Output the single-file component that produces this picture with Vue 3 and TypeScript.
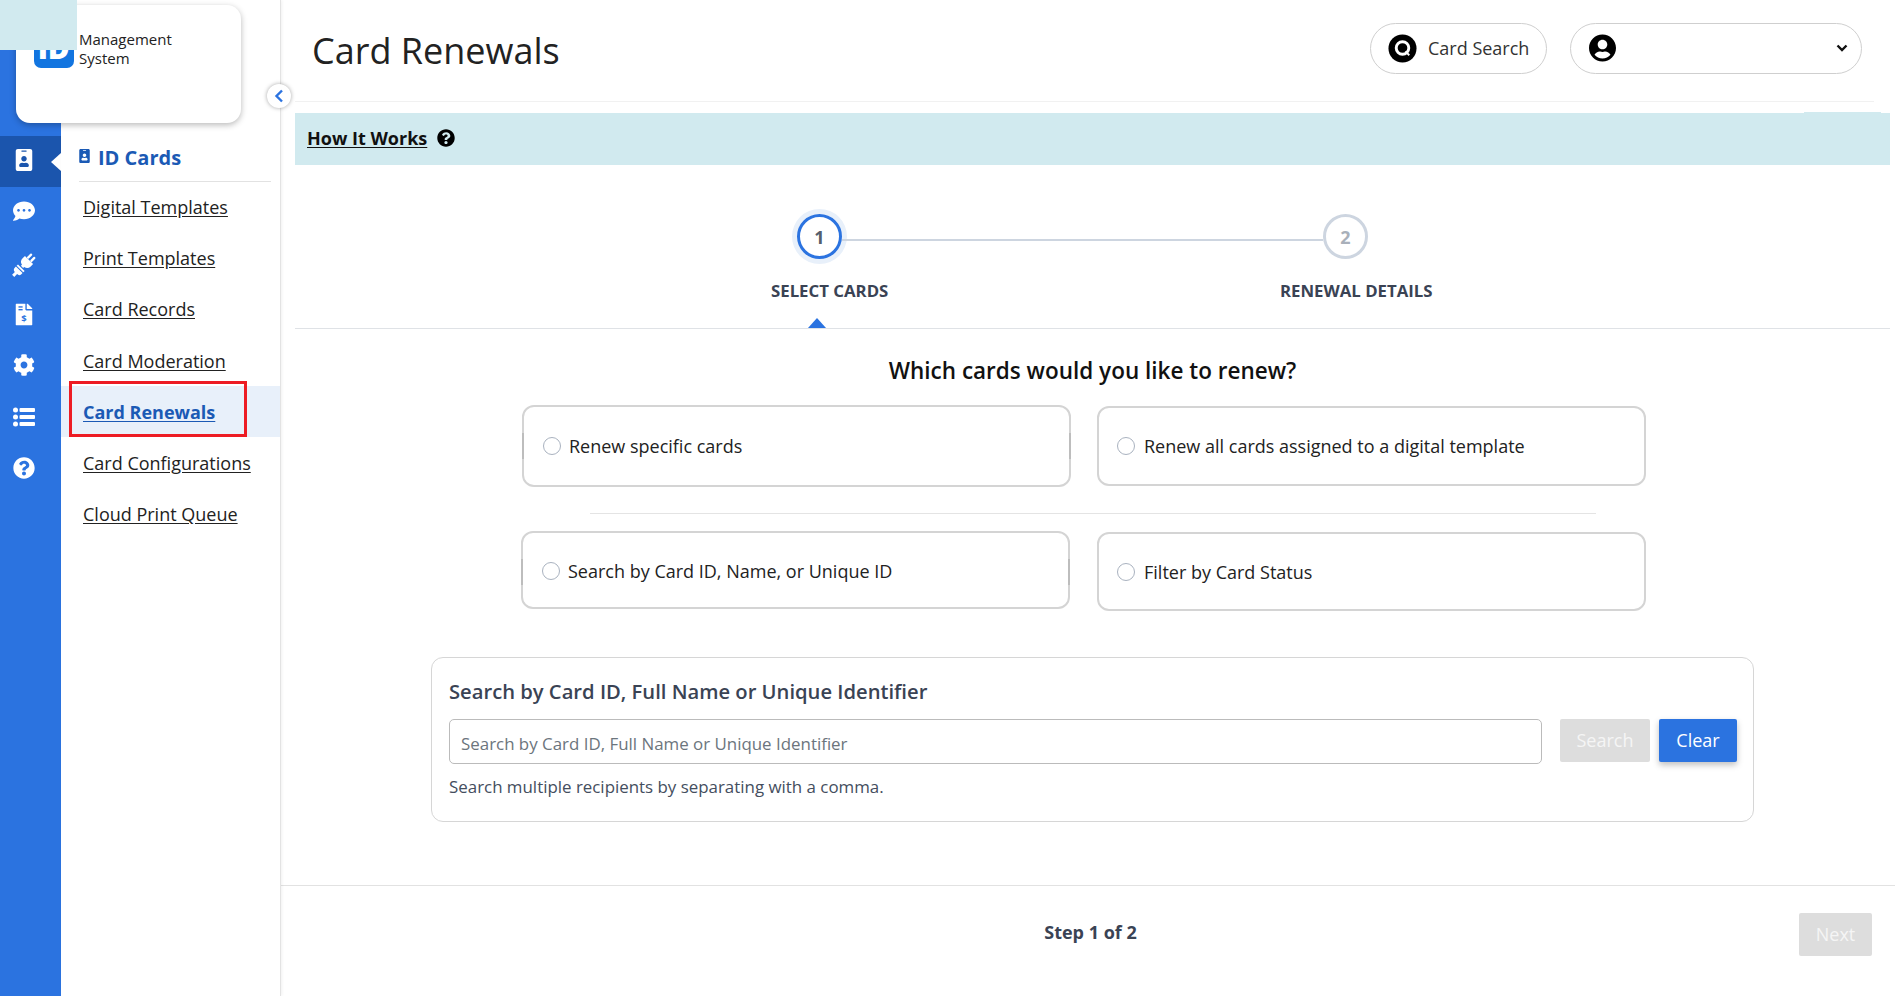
<script setup lang="ts">
const railIcons = ['badge', 'chat', 'plug', 'file', 'cog', 'list', 'help']

const navLinks = [
  'Digital Templates',
  'Print Templates',
  'Card Records',
  'Card Moderation',
  'Card Renewals',
  'Card Configurations',
  'Cloud Print Queue',
]
const activeLink = 'Card Renewals'

const questionPath =
  'M504 256c0 136.997-111.043 248-248 248S8 392.997 8 256C8 119.083 119.043 8 256 8s248 111.083 248 248zM262.655 90c-54.497 0-89.255 22.957-116.549 63.758-3.536 5.286-2.353 12.415 2.715 16.258l34.699 26.31c5.205 3.947 12.621 3.008 16.665-2.122 17.864-22.658 30.113-35.797 57.303-35.797 20.429 0 45.698 13.148 45.698 32.958 0 14.976-12.363 22.667-32.534 33.976C247.128 238.528 216 254.941 216 296v4c0 6.627 5.373 12 12 12h56c6.627 0 12-5.373 12-12v-1.333c0-28.462 83.186-29.647 83.186-106.667 0-58.002-60.165-102-116.531-102zM256 338c-25.365 0-46 20.635-46 46 0 25.364 20.635 46 46 46s46-20.636 46-46c0-25.365-20.635-46-46-46z'
</script>

<template>
  <div class="page">
    <!-- icon rail -->
    <aside class="rail">
      <div v-for="icon in railIcons" :key="icon" class="rail-item" :class="{ active: icon === 'badge' }">
        <svg v-if="icon === 'badge'" class="rail-icon" viewBox="0 0 384 512">
          <path fill="#fff" d="M336 0H48C21.5 0 0 21.5 0 48v416c0 26.5 21.500 48 48 48h288c26.500 0 48-21.500 48-48V48c0-26.500-21.500-48-48-48zM144 32h96c8.800 0 16 7.200 16 16s-7.200 16-16 16h-96c-8.800 0-16-7.200-16-16s7.200-16 16-16zm48 128c35.300 0 64 28.700 64 64s-28.700 64-64 64-64-28.700-64-64 28.700-64 64-64zm112 236.800c0 10.600-10 19.200-22.400 19.200H102.400C90 416 80 407.400 80 396.800v-19.200c0-31.800 30.100-57.600 67.200-57.600h5c12.300 5.100 25.700 8 39.800 8s27.600-2.900 39.800-8h5c37.100 0 67.200 25.800 67.200 57.600v19.200z" />
        </svg>
        <svg v-else-if="icon === 'chat'" class="rail-icon" viewBox="0 0 512 512">
          <path fill="#fff" d="M256 32C114.600 32 0 125.100 0 240c0 49.600 21.400 95 57 130.700C44.500 421.100 2.700 466 2.200 466.500c-2.200 2.300-2.800 5.700-1.500 8.700S4.800 480 8 480c66.300 0 116-31.800 140.600-51.400 32.700 12.300 69 19.400 107.400 19.400 141.400 0 256-93.100 256-208S397.400 32 256 32zM128 272c-17.700 0-32-14.300-32-32s14.300-32 32-32 32 14.300 32 32-14.300 32-32 32zm128 0c-17.700 0-32-14.300-32-32s14.300-32 32-32 32 14.300 32 32-14.300 32-32 32zm128 0c-17.700 0-32-14.300-32-32s14.300-32 32-32 32 14.300 32 32-14.300 32-32 32z" />
        </svg>
        <svg v-else-if="icon === 'plug'" class="rail-icon plug" viewBox="0 0 24 24">
          <g fill="#fff" transform="rotate(45 12 12)">
            <rect x="8.700" y="-1.500" width="2.200" height="6" rx="1" />
            <rect x="13.100" y="-1.500" width="2.200" height="6" rx="1" />
            <path d="M6.500 4.500h11v3.200a5 5 0 0 1-4 4.900V14h-3v-1.400a5 5 0 0 1-4-4.900z" />
            <rect x="7.500" y="15" width="9" height="1.800" />
            <path d="M7.500 17.800h9v1.600a3 3 0 0 1-3 2.800v3.800h-3v-3.800a3 3 0 0 1-3-2.800z" />
          </g>
        </svg>
        <svg v-else-if="icon === 'file'" class="rail-icon file" viewBox="0 0 384 512">
          <path fill="#fff" d="M377 105L279 7c-4.500-4.500-10.600-7-17-7H256v128h128v-6.100c0-6.300-2.500-12.400-7-16.900zM224 136V0H24C10.700 0 0 10.700 0 24v464c0 13.300 10.700 24 24 24h336c13.300 0 24-10.700 24-24V160H248c-13.200 0-24-10.800-24-24z" />
          <rect x="64" y="64" width="96" height="32" fill="#2b73e0" />
          <rect x="64" y="128" width="96" height="32" fill="#2b73e0" />
          <text x="192" y="420" text-anchor="middle" class="dollar">$</text>
        </svg>
        <svg v-else-if="icon === 'cog'" class="rail-icon" viewBox="0 0 512 512">
          <path fill="#fff" d="M487.400 315.700l-42.600-24.600c4.300-23.200 4.300-47 0-70.200l42.600-24.600c4.900-2.800 7.100-8.600 5.500-14-11.100-35.600-30-67.800-54.700-94.600-3.800-4.100-10-5.100-14.800-2.300L380.800 110c-17.900-15.400-38.500-27.300-60.800-35.100V25.800c0-5.600-3.900-10.500-9.400-11.700-36.700-8.200-74.300-7.800-109.200 0-5.500 1.200-9.400 6.100-9.400 11.700V75c-22.200 7.900-42.800 19.800-60.800 35.100L88.700 85.500c-4.900-2.800-11-1.900-14.800 2.300-24.700 26.700-43.600 58.900-54.700 94.600-1.700 5.400.6 11.200 5.500 14L67.300 221c-4.300 23.200-4.300 47 0 70.200l-42.600 24.600c-4.900 2.800-7.100 8.600-5.500 14 11.100 35.600 30 67.800 54.700 94.600 3.800 4.100 10 5.100 14.800 2.300l42.600-24.600c17.900 15.400 38.500 27.300 60.800 35.100v49.200c0 5.600 3.900 10.500 9.400 11.700 36.700 8.200 74.300 7.800 109.200 0 5.500-1.200 9.400-6.100 9.400-11.700v-49.200c22.200-7.900 42.800-19.800 60.800-35.100l42.600 24.600c4.900 2.800 11 1.900 14.800-2.300 24.700-26.700 43.600-58.900 54.700-94.600 1.500-5.500-.7-11.300-5.600-14.100zM256 336c-44.100 0-80-35.900-80-80s35.900-80 80-80 80 35.900 80 80-35.900 80-80 80z" />
        </svg>
        <svg v-else-if="icon === 'list'" class="rail-icon" viewBox="0 0 22 20">
          <g fill="#fff">
            <circle cx="2.500" cy="3" r="2.500" />
            <circle cx="2.500" cy="10" r="2.500" />
            <circle cx="2.500" cy="17" r="2.500" />
            <rect x="6.500" y="1" width="15.500" height="4" rx="1" />
            <rect x="6.500" y="8" width="15.500" height="4" rx="1" />
            <rect x="6.500" y="15" width="15.500" height="4" rx="1" />
          </g>
        </svg>
        <svg v-else class="rail-icon" viewBox="0 0 512 512">
          <path fill="#fff" :d="questionPath" />
        </svg>
      </div>
    </aside>

    <!-- logo card sits over rail and sidebar -->
    <div class="logo-card">
      <div class="logo-mark">iD</div>
      <div class="logo-text">Management<br />System</div>
    </div>
    <div class="logo-patch"></div>

    <!-- secondary nav -->
    <nav class="sidebar">
      <div class="sidebar-title">
        <svg class="title-icon" viewBox="0 0 384 512">
          <path fill="#1b5ab5" d="M336 0H48C21.500 0 0 21.500 0 48v416c0 26.500 21.500 48 48 48h288c26.500 0 48-21.500 48-48V48c0-26.500-21.500-48-48-48zM144 32h96c8.800 0 16 7.200 16 16s-7.200 16-16 16h-96c-8.800 0-16-7.200-16-16s7.200-16 16-16zm48 128c35.300 0 64 28.700 64 64s-28.700 64-64 64-64-28.700-64-64 28.700-64 64-64zm112 236.800c0 10.600-10 19.200-22.400 19.200H102.400C90 416 80 407.400 80 396.800v-19.200c0-31.800 30.100-57.600 67.200-57.600h5c12.300 5.100 25.700 8 39.800 8s27.600-2.900 39.800-8h5c37.100 0 67.200 25.800 67.200 57.600v19.200z" />
        </svg>
        <span>ID Cards</span>
      </div>
      <div v-for="link in navLinks" :key="link" class="nav-row" :class="{ active: link === activeLink }">
        <a href="#" class="nav-link">{{ link }}</a>
        <div v-if="link === activeLink" class="red-box"></div>
      </div>
      <button class="collapse-btn" aria-label="Collapse">
        <svg width="12" height="14" viewBox="0 0 12 14">
          <path d="M9 1.500 3.500 7 9 12.500" fill="none" stroke="#2b73e0" stroke-width="2.400" />
        </svg>
      </button>
    </nav>

    <main class="main">
      <header class="topbar">
        <h1 class="page-title">Card Renewals</h1>
        <div class="pill search-pill">
          <svg class="pill-icon" viewBox="0 0 30 30">
            <circle cx="15" cy="15" r="14.500" fill="#000" />
            <circle cx="15" cy="14.500" r="6.500" fill="none" stroke="#fff" stroke-width="3" />
            <path d="M18 18l4 4" stroke="#fff" stroke-width="2" />
          </svg>
          <span>Card Search</span>
        </div>
        <div class="pill user-pill">
          <svg class="user-icon" viewBox="0 0 496 512">
            <path fill="#000" d="M248 8C111 8 0 119 0 256s111 248 248 248 248-111 248-248S385 8 248 8zm0 96c48.600 0 88 39.400 88 88s-39.400 88-88 88-88-39.400-88-88 39.400-88 88-88zm0 344c-58.700 0-111.300-26.600-146.500-68.200 18.800-35.400 55.600-59.800 98.500-59.800 2.400 0 4.800.4 7.100 1.100 13 4.200 26.600 6.900 40.900 6.900 14.300 0 28-2.700 40.900-6.900 2.300-.7 4.700-1.100 7.100-1.100 42.900 0 79.700 24.400 98.500 59.800C359.300 421.400 306.700 448 248 448z" />
          </svg>
          <svg class="caret-down" width="12" height="8" viewBox="0 0 12 8">
            <path d="M1.500 1.500 6 6l4.500-4.500" fill="none" stroke="#111" stroke-width="2.400" />
          </svg>
        </div>
      </header>

      <section class="banner">
        <a href="#" class="banner-link">How It Works</a>
        <svg class="banner-icon" viewBox="0 0 512 512">
          <path fill="#000" :d="questionPath" />
        </svg>
        <div class="banner-bump"></div>
      </section>

      <section class="steps">
        <div class="step-track">
          <div class="step-circle current">1</div>
          <div class="step-line"></div>
          <div class="step-circle">2</div>
        </div>
        <div class="step-labels">
          <span class="step-label first">SELECT CARDS</span>
          <span class="step-label">RENEWAL DETAILS</span>
        </div>
        <div class="step-caret"></div>
      </section>

      <h2 class="question">Which cards would you like to renew?</h2>

      <div class="option-row top">
        <label class="option left">
          <input type="radio" name="scope" />
          <span>Renew specific cards</span>
        </label>
        <label class="option right">
          <input type="radio" name="scope" />
          <span>Renew all cards assigned to a digital template</span>
        </label>
      </div>
      <div class="option-divider"></div>
      <div class="option-row bottom">
        <label class="option left">
          <input type="radio" name="mode" />
          <span>Search by Card ID, Name, or Unique ID</span>
        </label>
        <label class="option right">
          <input type="radio" name="mode" />
          <span>Filter by Card Status</span>
        </label>
      </div>

      <section class="search-panel">
        <h3 class="panel-title">Search by Card ID, Full Name or Unique Identifier</h3>
        <div class="search-row">
          <input class="search-input" type="text" placeholder="Search by Card ID, Full Name or Unique Identifier" />
          <button class="btn disabled search-btn">Search</button>
          <button class="btn primary">Clear</button>
        </div>
        <p class="panel-help">Search multiple recipients by separating with a comma.</p>
      </section>

      <footer class="footer">
        <span></span>
        <span class="step-count">Step 1 of 2</span>
        <button class="btn disabled next-btn">Next</button>
      </footer>
    </main>
  </div>
</template>

<style>
html,
body {
  margin: 0;
  background: #fff;
}
</style>

<style scoped>
.page {
  position: relative;
  display: flex;
  height: 996px;
  overflow: hidden;
  font-family: 'Open Sans', 'Noto Sans', sans-serif;
  color: #222;
  background: #fff;
}

.rail {
  width: 61px;
  flex-shrink: 0;
  padding-top: 136px;
  box-sizing: border-box;
  background: #2b73e0;
}

.rail-item {
  position: relative;
  display: flex;
  align-items: center;
  justify-content: center;
  height: 51.3px;
  padding: 0 13px 3px 0;
  box-sizing: border-box;
}

.rail-item.active {
  background: #1b55ad;
}

.rail-item.active::after {
  content: '';
  position: absolute;
  right: 0;
  top: 50%;
  margin-top: -9px;
  border-style: solid;
  border-width: 9px 10px 9px 0;
  border-color: transparent #fff transparent transparent;
}

.rail-icon {
  width: 22px;
  height: 22px;
}

.rail-icon.plug {
  width: 25px;
  height: 25px;
  transform: translate(-1px, 3px);
}

.rail-icon.file {
  transform: translateY(0.5px);
}

.dollar {
  font: 700 220px 'Open Sans', sans-serif;
  fill: #2b73e0;
}

.logo-card {
  position: absolute;
  left: 16px;
  top: 5px;
  width: 225px;
  height: 118px;
  background: #fff;
  border-radius: 14px;
  box-shadow: 0 2px 6px rgba(0, 0, 0, 0.28);
  z-index: 2;
}

.logo-mark {
  position: absolute;
  left: 18px;
  top: 23px;
  width: 40px;
  height: 40px;
  border-radius: 7px;
  background: #1275e0;
  color: #fff;
  font-size: 30px;
  font-weight: 800;
  line-height: 40px;
  text-align: center;
}

.logo-text {
  position: absolute;
  left: 63px;
  top: 25px;
  font-size: 15px;
  line-height: 19px;
  color: #222;
}

.logo-patch {
  position: absolute;
  left: 0;
  top: 0;
  width: 77px;
  height: 50px;
  background: #d1eaef;
  z-index: 3;
}

.sidebar {
  position: relative;
  width: 220px;
  flex-shrink: 0;
  box-sizing: border-box;
  padding-top: 145px;
  border-right: 1px solid #e3e3e3;
  box-shadow: 1px 0 3px rgba(0, 0, 0, 0.06);
  z-index: 1;
  background: #fff;
}

.sidebar-title {
  display: flex;
  align-items: center;
  gap: 8px;
  height: 25px;
  margin: 0 9px -1px 18px;
  padding-bottom: 11px;
  border-bottom: 1px solid #e2e2e2;
  color: #1b5ab5;
  font-size: 20px;
  font-weight: 700;
  line-height: 24px;
}

.title-icon {
  width: 11px;
  height: 14px;
  margin-top: -3px;
}

.nav-row {
  position: relative;
  display: flex;
  align-items: center;
  height: 51.3px;
  padding-left: 22px;
}

.nav-row.active {
  background: #e8f0fa;
}

.nav-link {
  font-size: 18px;
  color: #222;
  text-decoration: underline;
  text-underline-offset: 2px;
}

.nav-row.active .nav-link {
  color: #1b5ab5;
  font-weight: 700;
}

.red-box {
  position: absolute;
  left: 8px;
  top: -5px;
  width: 178px;
  height: 56px;
  box-sizing: border-box;
  border: 3px solid #ed1c24;
}

.collapse-btn {
  position: absolute;
  left: 206px;
  top: 84px;
  width: 24px;
  height: 24px;
  padding: 0;
  display: flex;
  align-items: center;
  justify-content: center;
  border: none;
  border-radius: 50%;
  background: #fff;
  box-shadow: 0 0 4px rgba(0, 0, 0, 0.35);
}

.main {
  flex: 1;
  min-width: 0;
  display: flex;
  flex-direction: column;
}

.topbar {
  display: flex;
  align-items: center;
  height: 96px;
  margin: 0 21px 0 14px;
  padding: 0 12px 5px 17px;
  border-bottom: 1px solid #f1f1f1;
}

.page-title {
  margin: 4px auto 0 0;
  font-size: 36px;
  font-weight: 400;
  color: #222;
}

.pill {
  display: flex;
  align-items: center;
  height: 51px;
  box-sizing: border-box;
  border: 1px solid #cfcfcf;
  border-radius: 26px;
  background: #fff;
}

.search-pill {
  width: 177px;
  padding-left: 17px;
  gap: 11px;
  font-size: 18px;
  color: #333;
}

.pill-icon {
  width: 29px;
  height: 29px;
}

.user-pill {
  width: 292px;
  margin-left: 23px;
  padding: 0 13px 0 18px;
  justify-content: space-between;
}

.user-icon {
  width: 27px;
  height: 28px;
}

.banner {
  position: relative;
  display: flex;
  align-items: center;
  gap: 10px;
  height: 50px;
  margin: 11px 5px 0 14px;
  padding: 0 0 2px 12px;
  background: #d1eaef;
}

.banner-link {
  font-size: 18px;
  font-weight: 700;
  color: #111;
  text-decoration: underline;
  text-underline-offset: 2px;
}

.banner-icon {
  width: 18px;
  height: 18px;
}

.banner-bump {
  position: absolute;
  right: 9px;
  top: -1px;
  width: 77px;
  height: 1px;
  background: #d1eaef;
}

.steps {
  position: relative;
  height: 163px;
  margin-left: 14px;
  margin-right: 5px;
  border-bottom: 1px solid #dfe2e6;
}

.step-track {
  display: flex;
  align-items: center;
  padding: 49px 0 0 502px;
}

.step-circle {
  display: flex;
  align-items: center;
  justify-content: center;
  width: 45px;
  height: 45px;
  box-sizing: border-box;
  border: 3px solid #cdd5e0;
  border-radius: 50%;
  color: #a9b0ba;
  font-size: 18px;
  font-weight: 700;
  flex-shrink: 0;
}

.step-circle.current {
  border-color: #2b73e0;
  box-shadow: 0 0 0 5px #e8f0fa;
  color: #555f6d;
}

.step-line {
  width: 481px;
  height: 2px;
  margin: 6px 0 0;
  background: #cdd5e0;
}

.step-labels {
  display: flex;
  padding: 21px 0 0 476px;
}

.step-label {
  font-size: 16.8px;
  font-weight: 700;
  line-height: 22px;
  color: #3a4354;
}

.step-label.first {
  width: 509px;
}

.step-caret {
  position: absolute;
  left: 513px;
  bottom: 0;
  border-style: solid;
  border-width: 0 9px 10px 9px;
  border-color: transparent transparent #2b73e0 transparent;
}

.question {
  margin: 26px 0 0;
  padding-left: 9px;
  font-size: 22.5px;
  font-weight: 600;
  line-height: 32px;
  text-align: center;
  color: #111;
}

.option-row {
  display: flex;
  align-items: flex-start;
  gap: 26px;
  margin-left: 241px;
}

.option-row.top {
  margin-top: 18px;
}

.option {
  position: relative;
  display: flex;
  align-items: center;
  gap: 8px;
  width: 549px;
  padding-left: 19px;
  box-sizing: border-box;
  border: 2px solid #d4d4d4;
  border-radius: 12px;
  font-size: 18px;
  color: #222;
  background: #fff;
}

.option.right {
  gap: 9px;
  padding-left: 18px;
}

/* darker patches on the side borders of the left cards */
.option.left::before,
.option.left::after {
  content: '';
  position: absolute;
  top: 26px;
  width: 2px;
  height: 26px;
  background: #bdbdbd;
}

.option.left::before {
  left: -2px;
}

.option.left::after {
  right: -2px;
}

.top .left {
  height: 82px;
}

.top .right {
  height: 80px;
  margin-top: 1px;
}

.bottom {
  margin-left: 240px;
}

.bottom .left {
  height: 78px;
  padding-top: 2px;
}

.bottom .right {
  height: 79px;
  margin-top: 1px;
  margin-left: 1px;
}

.option input {
  appearance: none;
  width: 18px;
  height: 18px;
  margin: 0;
  border: 1px solid #a9b2bf;
  border-radius: 50%;
  background: #fff;
}

.option-divider {
  width: 1006px;
  height: 1px;
  margin: 26px 0 17px 309px;
  background: #e4e4e4;
}

.search-panel {
  width: 1323px;
  height: 165px;
  margin: 46px 0 0 150px;
  padding: 20px 17px 0;
  box-sizing: border-box;
  border: 1px solid #d6d6d6;
  border-radius: 12px;
}

.panel-title {
  margin: 0 0 15px;
  font-size: 20.2px;
  font-weight: 600;
  line-height: 26px;
  color: #3a4354;
}

.search-row {
  display: flex;
  align-items: flex-start;
}

.search-row > * {
  flex-shrink: 0;
}

.search-input {
  width: 1093px;
  height: 45px;
  padding: 4px 11px 0;
  box-sizing: border-box;
  border: 1px solid #bbb;
  border-radius: 5px;
  font-family: inherit;
  font-size: 16.9px;
  outline: none;
}

.search-input::placeholder {
  color: #6c757d;
}

.btn {
  height: 43px;
  padding: 0 0 2px;
  border: none;
  border-radius: 2px;
  font-family: inherit;
  font-size: 18px;
}

.btn.disabled {
  background: #ddd;
  color: #f5f5f5;
}

.search-btn {
  width: 90px;
  margin-left: 18px;
}

.btn.primary {
  width: 78px;
  margin-left: 9px;
  background: #2b73e0;
  color: #fff;
  box-shadow: 0 3px 6px rgba(0, 0, 0, 0.25);
}

.panel-help {
  margin: 12px 0 0;
  font-size: 16.9px;
  line-height: 22px;
  color: #444e5e;
}

.footer {
  display: grid;
  grid-template-columns: 1fr auto 1fr;
  align-items: start;
  height: 111px;
  margin-top: auto;
  padding: 27px 23px 0 28px;
  box-sizing: border-box;
  border-top: 1px solid #e2e2e2;
}

.step-count {
  margin-top: 6px;
  font-size: 18px;
  font-weight: 700;
  line-height: 26px;
  color: #3a4354;
}

.next-btn {
  width: 73px;
  justify-self: end;
}
</style>
